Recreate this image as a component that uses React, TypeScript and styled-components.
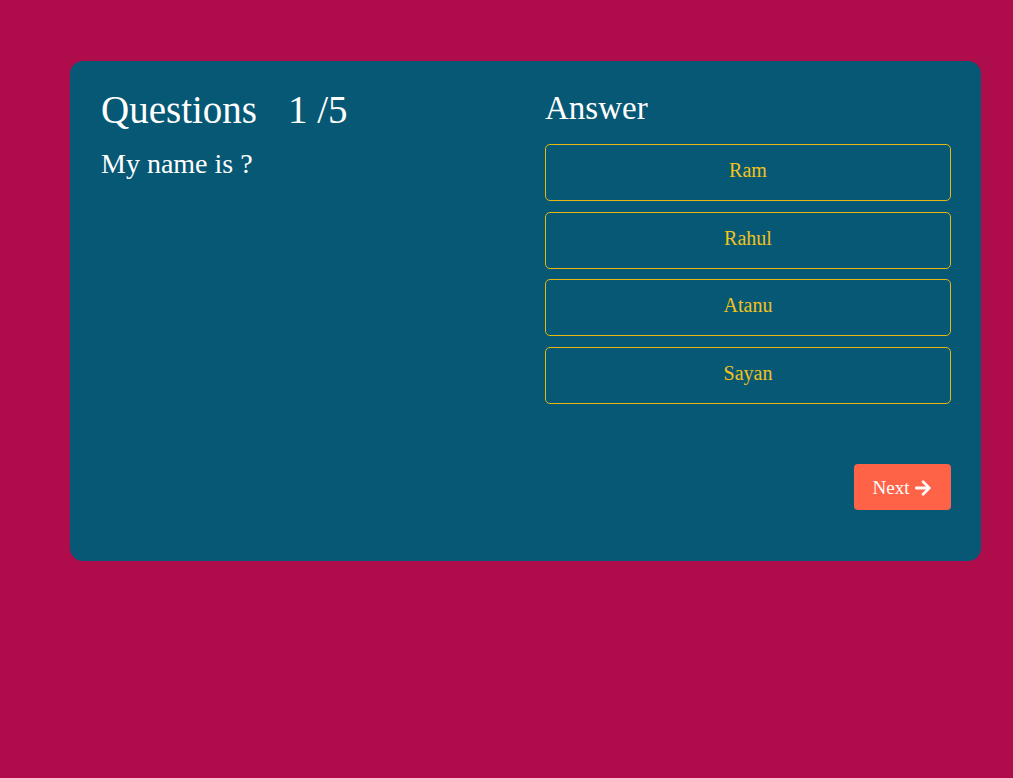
import React from "react";
import styled, { createGlobalStyle } from "styled-components";
import { FaArrowRight } from "react-icons/fa";

const Global = createGlobalStyle`
  html, body { margin: 0; padding: 0; }
  body {
    background: #af0c4b;
    min-height: 100vh;
    font-family: "Liberation Serif", "DejaVu Serif", serif;
  }
`;

const Page = styled.div`
  min-height: 778px;
  padding: 61px 0 0 70px;
  box-sizing: border-box;
`;

const Card = styled.div`
  width: 911px;
  height: 500px;
  box-sizing: border-box;
  padding: 30px 30px 30px 31px;
  background: #075874;
  border-radius: 13px;
  display: grid;
  grid-template-columns: 444px 406px;
  color: #ffffff;
`;

const Left = styled.section`
  display: flex;
  flex-direction: column;
`;

const Title = styled.h1`
  margin: 0;
  font-size: 39px;
  line-height: 38px;
  font-weight: 400;
  display: flex;
  align-items: baseline;
`;

const Count = styled.span`
  margin-left: 31px;
`;

const QuestionText = styled.p`
  margin: 18px 0 0;
  font-size: 28px;
  line-height: 1.2;
`;

const Right = styled.section`
  display: flex;
  flex-direction: column;
`;

const AnswerTitle = styled.h2`
  margin: 0 0 19px;
  font-size: 33px;
  line-height: 34px;
  font-weight: 400;
`;

const Options = styled.div`
  display: flex;
  flex-direction: column;
  gap: 10.5px;
`;

const Option = styled.button`
  height: 57px;
  width: 100%;
  box-sizing: border-box;
  background: transparent;
  border: 1px solid #e6b711;
  border-radius: 5px;
  color: #f2c21a;
  font-family: inherit;
  font-size: 20px;
  cursor: pointer;
  padding: 0 0 4px;
`;

const NextButton = styled.button`
  align-self: flex-end;
  margin-top: 60.5px;
  width: 97px;
  height: 46px;
  border: none;
  border-radius: 4px;
  background: #ff6347;
  color: #ffffff;
  font-family: inherit;
  font-size: 19px;
  display: flex;
  align-items: center;
  justify-content: center;
  gap: 5px;
  padding: 2px 0 0;
  cursor: pointer;
  svg { width: 18px; height: 18px; }
`;

const answers = ["Ram", "Rahul", "Atanu", "Sayan"];

export default function App() {
  return (
    <Page>
      <Global />
      <Card>
        <Left>
          <Title>
            <span>Questions</span>
            <Count>1 /5</Count>
          </Title>
          <QuestionText>My name is ?</QuestionText>
        </Left>
        <Right>
          <AnswerTitle>Answer</AnswerTitle>
          <Options>
            {answers.map((a) => (
              <Option key={a}>{a}</Option>
            ))}
          </Options>
          <NextButton>
            Next <FaArrowRight />
          </NextButton>
        </Right>
      </Card>
    </Page>
  );
}
